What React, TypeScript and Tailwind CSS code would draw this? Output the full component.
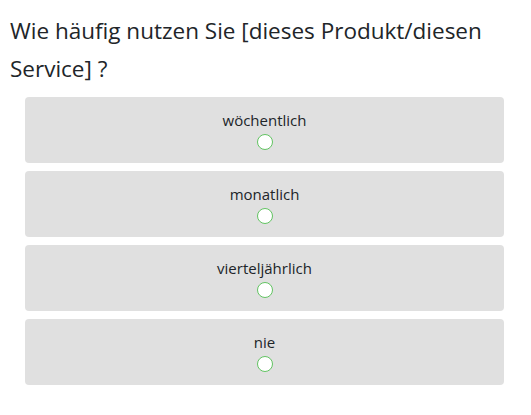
const options = ["wöchentlich", "monatlich", "vierteljährlich", "nie"]

export default function App() {
  return (
    <div className="min-h-[415px] w-[531px] bg-white font-['Open_Sans',sans-serif] text-[#212529]">
      <h1 className="px-[10px] pt-[12px] text-[22.5px] font-normal leading-[38px]">
        Wie häufig nutzen Sie [dieses Produkt/diesen Service] ?
      </h1>
      <div className="ml-[25px] mt-[9px] flex w-[479px] flex-col gap-[8px]">
        {options.map((option) => (
          <label
            key={option}
            className="flex h-[66px] cursor-pointer flex-col items-center rounded-[4px] bg-[#e0e0e0] pt-[12px]"
          >
            <span className="text-[15px] leading-[23px] text-[#212529]">{option}</span>
            <span className="mt-[2px] h-[16px] w-[16px] rounded-full border border-[#62c462] bg-white" />
          </label>
        ))}
      </div>
    </div>
  )
}
